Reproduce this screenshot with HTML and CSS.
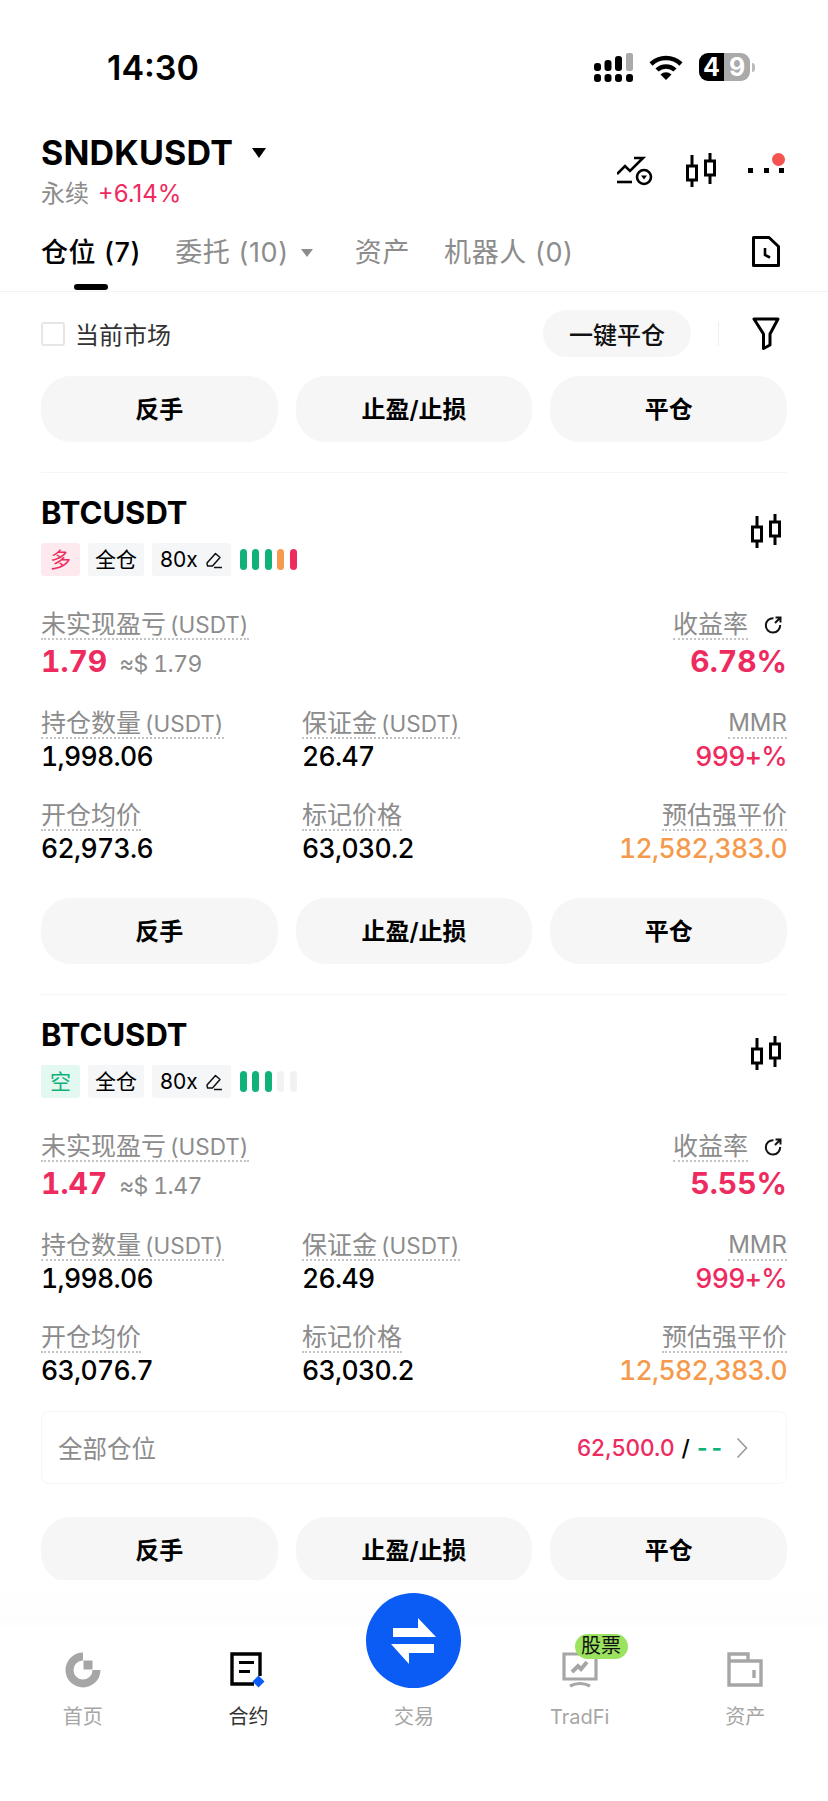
FILE: index.html
```html
<!DOCTYPE html>
<html lang="zh-CN">
<head>
    <meta charset="UTF-8">
    <title>SNDKUSDT 仓位</title>
    <link rel="stylesheet" href="styles.css">
</head>
<body>
    <!-- shared icons -->
    <svg class="icon-defs" width="0" height="0">
        <symbol id="candles" viewBox="0 0 30 34">
            <path d="M6 2V13M6 27V34M24 0V8M24 22V31" fill="none" stroke="currentColor" stroke-width="3"/>
            <rect x="1.5" y="13" width="9" height="14" fill="none" stroke="currentColor" stroke-width="3"/>
            <rect x="19.5" y="8" width="9" height="14" fill="none" stroke="currentColor" stroke-width="3"/>
        </symbol>
        <symbol id="refresh" viewBox="0 0 20 20">
            <path d="M10.5 3.2A7.2 7.2 0 1 0 17.2 10" fill="none" stroke="currentColor" stroke-width="2"/>
            <path d="M12 8L17 3M12.5 2.5H17.5V7.5" fill="none" stroke="currentColor" stroke-width="2"/>
        </symbol>
        <symbol id="pencil" viewBox="0 0 18 18">
            <path d="M2 12L10.5 2.5L15 6.5L7.5 15H2.5Z" fill="none" stroke="currentColor" stroke-width="1.5" stroke-linejoin="round"/>
            <path d="M9 16.5H17" fill="none" stroke="currentColor" stroke-width="1.5"/>
        </symbol>
    </svg>

    <main class="content">
        <div class="status-bar">
            <span class="status-time">14:30</span>
            <div class="status-icons">
                <svg class="signal" viewBox="0 0 39 29">
                    <rect x="0" y="10" width="7" height="8" rx="3"/>
                    <rect x="10.5" y="7" width="7" height="11" rx="3"/>
                    <rect x="21" y="3" width="7" height="15" rx="3"/>
                    <rect x="32" y="0" width="7" height="18" rx="2" fill="#aaa"/>
                    <rect x="0" y="21" width="7" height="8" rx="3"/>
                    <rect x="10.5" y="21" width="7" height="8" rx="3"/>
                    <rect x="21" y="21" width="7" height="8" rx="3"/>
                    <rect x="32" y="21" width="7" height="8" rx="3"/>
                </svg>
                <svg class="wifi" viewBox="0 0 34 26">
                    <path d="M2 10A22 22 0 0 1 32 10M8 16A13 13 0 0 1 26 16" fill="none" stroke="#000" stroke-width="4.5"/>
                    <path d="M11.5 20.5A8 8 0 0 1 22.500 20.500L17 26Z"/>
                </svg>
                <div class="battery">
                    <span class="battery-used">4</span><span class="battery-rest">9</span>
                </div>
                <span class="battery-nub"></span>
            </div>
        </div>

        <header class="page-header">
            <div class="symbol-info">
                <div class="symbol-title">SNDKUSDT <span class="caret"></span></div>
                <div class="symbol-sub">永续 <span class="up">+6.14%</span></div>
            </div>
            <div class="header-actions">
                <svg class="trend-icon" viewBox="0 0 36 30" fill="none" stroke="#000" stroke-width="2.6">
                    <path d="M0 18L8 10L13 15L26 2H17"/>
                    <path d="M0 26H15"/>
                    <circle cx="27" cy="21" r="7"/>
                    <path d="M24 19.500H30L27 23.500Z" fill="#000" stroke="none"/>
                </svg>
                <svg class="candle-icon"><use href="#candles"/></svg>
                <div class="more-dots">
                    <span class="dot"></span><span class="dot"></span><span class="dot"></span>
                    <span class="red-dot"></span>
                </div>
            </div>
        </header>

        <nav class="tabs">
            <a class="tab active">仓位 (7)</a>
            <a class="tab">委托 (10) <span class="tab-caret"></span></a>
            <a class="tab">资产</a>
            <a class="tab">机器人 (0)</a>
            <svg class="history-icon" viewBox="0 0 28 31" fill="none" stroke="#000" stroke-width="3">
                <path d="M1.500 1.500H17L26.500 10.500V29.500H1.500Z" stroke-linejoin="round"/>
                <path d="M13 12V19L18 21.500" stroke-width="2.600"/>
            </svg>
        </nav>

        <section class="filter-row">
            <label class="market-check"><span class="checkbox"></span>当前市场</label>
            <div class="filter-right">
                <button class="close-all">一键平仓</button>
                <span class="filter-sep"></span>
                <svg class="filter-icon" viewBox="0 0 28 33" fill="none" stroke="#000" stroke-width="3" stroke-linejoin="round">
                    <path d="M2 2H26L18 17V28L11.500 31.500V17Z"/>
                </svg>
            </div>
        </section>

        <div class="actions">
            <button class="action-btn">反手</button>
            <button class="action-btn">止盈/止损</button>
            <button class="action-btn">平仓</button>
        </div>

        <article class="position">
            <div class="position-head">
                <div>
                    <h2 class="position-name">BTCUSDT</h2>
                    <div class="tags">
                        <span class="tag tag-long">多</span>
                        <span class="tag tag-mode">全仓</span>
                        <span class="tag">80x <svg class="pencil"><use href="#pencil"/></svg></span>
                        <div class="risk">
                            <i class="green"></i><i class="green"></i><i class="green"></i><i class="orange"></i><i class="red"></i>
                        </div>
                    </div>
                </div>
                <svg class="candle-icon"><use href="#candles"/></svg>
            </div>
            <div class="metrics">
                <div class="metric wide">
                    <span class="label">未实现盈亏 <span class="unit">(USDT)</span></span>
                    <div class="pnl"><span class="pnl-value">1.79</span><span class="pnl-usd">≈$ 1.79</span></div>
                </div>
                <div class="metric right">
                    <div class="label-line"><span class="label">收益率</span><svg class="refresh"><use href="#refresh"/></svg></div>
                    <div class="pnl"><span class="pnl-value">6.78%</span></div>
                </div>
                <div class="metric">
                    <span class="label">持仓数量 <span class="unit">(USDT)</span></span>
                    <div class="value">1,998.06</div>
                </div>
                <div class="metric">
                    <span class="label">保证金 <span class="unit">(USDT)</span></span>
                    <div class="value">26.47</div>
                </div>
                <div class="metric right">
                    <span class="label label-en">MMR</span>
                    <div class="value up">999+%</div>
                </div>
                <div class="metric">
                    <span class="label">开仓均价</span>
                    <div class="value">62,973.6</div>
                </div>
                <div class="metric">
                    <span class="label">标记价格</span>
                    <div class="value">63,030.2</div>
                </div>
                <div class="metric right">
                    <span class="label">预估强平价</span>
                    <div class="value warn">12,582,383.0</div>
                </div>
            </div>
            <div class="actions">
                <button class="action-btn">反手</button>
                <button class="action-btn">止盈/止损</button>
                <button class="action-btn">平仓</button>
            </div>
        </article>

        <article class="position">
            <div class="position-head">
                <div>
                    <h2 class="position-name">BTCUSDT</h2>
                    <div class="tags">
                        <span class="tag tag-short">空</span>
                        <span class="tag tag-mode">全仓</span>
                        <span class="tag">80x <svg class="pencil"><use href="#pencil"/></svg></span>
                        <div class="risk">
                            <i class="green"></i><i class="green"></i><i class="green"></i><i></i><i></i>
                        </div>
                    </div>
                </div>
                <svg class="candle-icon"><use href="#candles"/></svg>
            </div>
            <div class="metrics">
                <div class="metric wide">
                    <span class="label">未实现盈亏 <span class="unit">(USDT)</span></span>
                    <div class="pnl"><span class="pnl-value">1.47</span><span class="pnl-usd">≈$ 1.47</span></div>
                </div>
                <div class="metric right">
                    <div class="label-line"><span class="label">收益率</span><svg class="refresh"><use href="#refresh"/></svg></div>
                    <div class="pnl"><span class="pnl-value">5.55%</span></div>
                </div>
                <div class="metric">
                    <span class="label">持仓数量 <span class="unit">(USDT)</span></span>
                    <div class="value">1,998.06</div>
                </div>
                <div class="metric">
                    <span class="label">保证金 <span class="unit">(USDT)</span></span>
                    <div class="value">26.49</div>
                </div>
                <div class="metric right">
                    <span class="label label-en">MMR</span>
                    <div class="value up">999+%</div>
                </div>
                <div class="metric">
                    <span class="label">开仓均价</span>
                    <div class="value">63,076.7</div>
                </div>
                <div class="metric">
                    <span class="label">标记价格</span>
                    <div class="value">63,030.2</div>
                </div>
                <div class="metric right">
                    <span class="label">预估强平价</span>
                    <div class="value warn">12,582,383.0</div>
                </div>
            </div>
            <div class="all-positions">
                <span class="all-label">全部仓位</span>
                <div class="all-right">
                    <span class="up">62,500.0</span> <span>/</span> <span class="down">--</span>
                    <svg class="chevron" viewBox="0 0 12 22" fill="none" stroke="#999" stroke-width="1.600"><path d="M1.500 1.500L10.500 11L1.500 20.500"/></svg>
                </div>
            </div>
            <div class="actions">
                <button class="action-btn">反手</button>
                <button class="action-btn">止盈/止损</button>
                <button class="action-btn">平仓</button>
            </div>
        </article>
    </main>

    <nav class="bottom-nav">
        <a class="nav-item">
            <svg class="nav-icon" viewBox="0 0 36 36" fill="none">
                <path d="M18 4.500A13.500 13.500 0 1 0 31.500 18" stroke="#a6a6a6" stroke-width="8"/>
                <rect x="18.500" y="8.500" width="9" height="9" fill="#a6a6a6"/>
            </svg>
            <span class="nav-label">首页</span>
        </a>
        <a class="nav-item current">
            <svg class="nav-icon" viewBox="0 0 36 36" fill="none">
                <path d="M24 32H2V2H30V24" stroke="#000" stroke-width="3.400"/>
                <path d="M9 10.500H24M9 19.500H20" stroke="#000" stroke-width="3"/>
                <path d="M28.500 23.500L34.500 29.500L28.500 35.500L22.500 29.500Z" fill="#0a5cf5"/>
            </svg>
            <span class="nav-label">合约</span>
        </a>
        <a class="nav-item trade">
            <span class="trade-btn">
                <svg class="trade-arrows" viewBox="0 0 95 95" fill="#fff">
                    <path d="M27 35H52V25L70 44H27Z"/>
                    <path d="M25 51H68V60H43V71Z"/>
                </svg>
            </span>
            <span class="nav-label">交易</span>
        </a>
        <a class="nav-item">
            <span class="nav-icon-wrap">
                <svg class="nav-icon" viewBox="0 0 36 36" fill="none" stroke="#a6a6a6">
                    <path d="M2 2H34V27H2Z" stroke-width="3.200"/>
                    <path d="M8 34Q18 29 28 34" stroke-width="3.200"/>
                    <path d="M10 20L16 14L19 17L25 10" stroke-width="4"/>
                </svg>
                <span class="stock-badge">股票</span>
            </span>
            <span class="nav-label">TradFi</span>
        </a>
        <a class="nav-item">
            <svg class="nav-icon" viewBox="0 0 36 36" fill="none" stroke="#a6a6a6" stroke-width="3.400">
                <path d="M2 9V2H21V9M2 9H34V33H2Z"/>
                <path d="M27 18V26"/>
            </svg>
            <span class="nav-label">资产</span>
        </a>
    </nav>
</body>
</html>
```

FILE: styles.css
```css
* {
    box-sizing: border-box;
}
body {
    margin: 0;
    width: 828px;
    height: 1801px;
    overflow: hidden;
    background: #fff;
    color: #000;
    font-family: 'Inter', 'Noto Sans CJK SC', sans-serif;
    display: flex;
    flex-direction: column;
}
.icon-defs {
    position: absolute;
}
.up {
    color: #ee2b5f;
}
.down {
    color: #10b27a;
}
.warn {
    color: #f59a4c;
}
.content {
    height: 1580px;
    overflow: hidden;
    flex: none;
}

/* status bar */
.status-bar {
    height: 134px;
    padding: 0 73px 0 107px;
    display: flex;
    align-items: center;
    justify-content: space-between;
}
.status-time {
    font-size: 34px;
    font-weight: 600;
}
.status-icons {
    display: flex;
    align-items: center;
}
.signal {
    width: 39px;
    height: 29px;
    margin-right: 16px;
}
.wifi {
    width: 34px;
    height: 26px;
    margin-right: 16px;
}
.battery {
    width: 51px;
    height: 28px;
    border-radius: 9px;
    overflow: hidden;
    display: flex;
    font-size: 25px;
    font-weight: 700;
    line-height: 28px;
    color: #fff;
    text-align: center;
}
.battery-used {
    width: 25px;
    background: #000;
}
.battery-rest {
    width: 26px;
    background: #aaa;
}
.battery-nub {
    width: 3px;
    height: 9px;
    margin-left: 2px;
    background: #bbb;
    border-radius: 0 3px 3px 0;
}

/* symbol header */
.page-header {
    height: 84px;
    padding: 0 44px 0 41px;
    display: flex;
    justify-content: space-between;
}
.symbol-title {
    font-size: 34px;
    font-weight: 700;
    line-height: 38px;
    letter-spacing: 0.2px;
    display: flex;
    align-items: center;
}
.caret {
    margin-left: 19px;
    width: 0;
    height: 0;
    border-left: 7.5px solid transparent;
    border-right: 7.5px solid transparent;
    border-top: 10px solid #000;
}
.symbol-sub {
    margin-top: 6px;
    font-size: 24px;
    line-height: 32px;
    word-spacing: 2px;
    color: #8c8c8c;
}
.header-actions {
    position: relative;
    padding-top: 19px;
    display: flex;
    gap: 33px;
    align-items: flex-start;
}
.trend-icon {
    width: 36px;
    height: 30px;
    margin-top: 3px;
}
.candle-icon {
    width: 30px;
    height: 34px;
    color: #000;
    flex: none;
}
.more-dots {
    position: relative;
    width: 36px;
    height: 34px;
    margin-left: -1px;
    display: flex;
    justify-content: space-between;
    padding-top: 15px;
}
.dot {
    width: 5px;
    height: 5px;
    background: #000;
}
.red-dot {
    position: absolute;
    top: 0;
    right: -1px;
    width: 13px;
    height: 13px;
    border-radius: 50%;
    background: #f5534f;
}

/* tabs */
.tabs {
    height: 74px;
    padding: 17px 41px 0;
    display: flex;
    align-items: flex-start;
    border-bottom: 1px solid #f2f2f2;
    position: relative;
}
.tab {
    font-size: 27px;
    line-height: 36px;
    letter-spacing: 0.6px;
    color: #8c8c8c;
    margin-right: 34px;
    position: relative;
    display: flex;
    align-items: center;
    white-space: pre;
}
.tab.active {
    color: #000;
    font-weight: 500;
}
.tab.active::after {
    content: "";
    position: absolute;
    left: 33px;
    top: 49px;
    width: 34px;
    height: 6px;
    border-radius: 3px;
    background: #000;
}
.tab-caret {
    margin: 0 8px 0 4px;
    width: 0;
    height: 0;
    border-left: 6.500px solid transparent;
    border-right: 6.500px solid transparent;
    border-top: 8px solid #8c8c8c;
}
.history-icon {
    width: 28px;
    height: 31px;
    position: absolute;
    right: 48px;
    top: 18px;
}

/* filter row */
.filter-row {
    height: 65px;
    padding: 18px 48px 0 41px;
    display: flex;
    justify-content: space-between;
    align-items: center;
}
.market-check {
    display: flex;
    align-items: center;
    font-size: 24px;
    color: #333;
}
.checkbox {
    width: 24px;
    height: 24px;
    margin-right: 10px;
    border: 2px solid #e6e6e6;
    border-radius: 3px;
}
.filter-right {
    display: flex;
    align-items: center;
}
.close-all {
    width: 148px;
    height: 47px;
    border: 0;
    border-radius: 24px;
    background: #f6f6f6;
    color: #111;
    font: inherit;
    font-size: 24px;
    font-weight: 500;
    padding: 0;
}
.filter-sep {
    width: 1px;
    height: 24px;
    margin: 0 33px 0 27px;
    background: #eee;
}
.filter-icon {
    width: 28px;
    height: 33px;
}

/* action buttons */
.actions {
    margin: 19px 41px 0;
    display: grid;
    grid-template-columns: repeat(3, 1fr);
    gap: 18px;
}
.action-btn {
    height: 66px;
    border: 0;
    border-radius: 30px;
    background: #f6f6f6;
    color: #000;
    font: inherit;
    font-size: 24px;
    font-weight: 600;
    padding: 0 0 3px;
}

/* position cards */
.position {
    margin: 30px 41px 0;
    padding: 22px 0 30px;
    border-top: 1px solid #f6f6f6;
}
.position + .position {
    margin-top: 0;
}
.position .actions {
    margin: 34px 0 0;
}
.position-head {
    display: flex;
    justify-content: space-between;
}
.position-head .candle-icon {
    margin: 19px 6px 0 0;
}
.position-name {
    margin: 0;
    font-size: 31px;
    font-weight: 700;
    line-height: 36px;
}
.tags {
    margin-top: 12px;
    display: flex;
    gap: 8px;
    align-items: center;
}
.tag {
    height: 33px;
    padding: 0 8px;
    border-radius: 3px;
    background: #f4f6f7;
    font-size: 21px;
    line-height: 33px;
    display: flex;
    align-items: center;
    white-space: pre;
}
.tag-mode {
    padding: 0 7px;
}
.tag-long {
    background: #fde9ee;
    color: #ee2b5f;
    padding: 0 9px;
}
.tag-short {
    background: #e3f8f0;
    color: #10b27a;
    padding: 0 9px;
}
.pencil {
    width: 18px;
    height: 18px;
    color: #111;
    margin-left: 1px;
}
.risk {
    display: flex;
    gap: 5.500px;
    margin-left: 1px;
}
.risk i {
    width: 7px;
    height: 21px;
    border-radius: 4px;
    background: #f2f2f2;
}
.risk i.green {
    background: #10b27a;
}
.risk i.orange {
    background: #f59a4c;
}
.risk i.red {
    background: #ee2b5f;
}
.metrics {
    margin-top: 34px;
    display: grid;
    grid-template-columns: 261px 1fr auto;
    row-gap: 29px;
    font-variant-numeric: tabular-nums;
}
.metric {
    display: flex;
    flex-direction: column;
    align-items: flex-start;
}
.metric.wide {
    grid-column: span 2;
}
.metric.right {
    align-items: flex-end;
}
.label {
    font-size: 25px;
    line-height: 28px;
    word-spacing: -3px;
    color: #8c8c8c;
    border-bottom: 2px dotted #c4c4c4;
}
.label-en {
    font-size: 24px;
}
.unit {
    font-size: 22.500px;
    line-height: 1;
}
.label-line {
    display: flex;
    justify-content: flex-end;
    align-items: center;
    gap: 15px;
}
.refresh {
    width: 20px;
    height: 20px;
    color: #111;
    margin: 0 4px 0 0;
}
.pnl {
    margin: 3px 0 1px;
    height: 36px;
    display: flex;
    align-items: baseline;
}
.pnl-value {
    font-size: 30px;
    font-weight: 700;
    line-height: 36px;
    color: #ee2b5f;
}
.pnl-usd {
    margin-left: 12px;
    font-size: 23px;
    letter-spacing: -0.6px;
    color: #8c8c8c;
}
.value {
    margin-top: 1px;
    font-size: 26.500px;
    font-weight: 500;
    line-height: 32px;
    letter-spacing: -0.65px;
}

/* totals row */
.all-positions {
    margin-top: 25px;
    height: 73px;
    padding: 0 38px 0 16px;
    border: 1px solid #f6f6f6;
    border-radius: 8px;
    display: flex;
    justify-content: space-between;
    align-items: center;
}
.all-label {
    font-size: 24.500px;
    color: #8c8c8c;
}
.all-right {
    font-size: 22.500px;
    font-weight: 500;
    display: flex;
    align-items: center;
    gap: 7px;
}
.all-right .down {
    font-weight: 700;
    letter-spacing: 4px;
}
.chevron {
    width: 12px;
    height: 22px;
    margin-left: 3px;
}
.position:last-child {
    padding-bottom: 0;
}
.position:last-child .actions {
    margin-top: 33px;
}

/* bottom nav */
.bottom-nav {
    flex: 1;
    display: grid;
    grid-template-columns: repeat(5, 1fr);
    background: linear-gradient(#fff, #fdfdfd 45px, #fff 46px);
}
.nav-item {
    padding-top: 72px;
    display: flex;
    flex-direction: column;
    align-items: center;
}
.nav-icon {
    width: 36px;
    height: 36px;
    display: block;
}
.nav-icon-wrap {
    position: relative;
}
.nav-label {
    margin-top: 15px;
    font-size: 20px;
    line-height: 28px;
    color: #a6a6a6;
}
.current .nav-label {
    color: #333;
}
.trade {
    padding-top: 13px;
}
.trade-btn {
    width: 95px;
    height: 95px;
    border-radius: 50%;
    background: #0a5cf5;
}
.trade-arrows {
    width: 95px;
    height: 95px;
    display: block;
}
.trade .nav-label {
    margin-top: 15px;
}
.stock-badge {
    position: absolute;
    left: 13px;
    top: -18px;
    width: 53px;
    height: 25px;
    border-radius: 13px;
    background: #9be35f;
    color: #111;
    font-size: 20px;
    line-height: 25px;
    text-align: center;
}
```
